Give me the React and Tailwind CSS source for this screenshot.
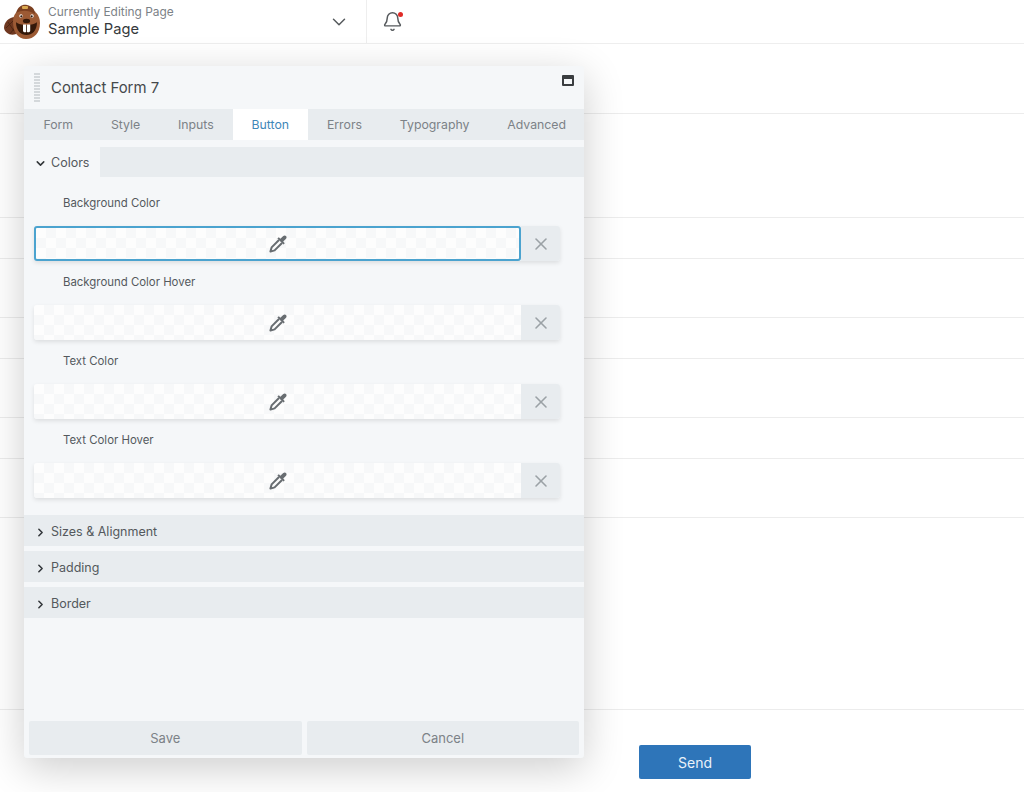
import React from 'react';
import { Bell, ChevronDown, ChevronRight, X } from 'lucide-react';

const pageRows = [70, 104, 41, 59, 41, 59, 41, 59, 192];
const tabs = ['Form', 'Style', 'Inputs', 'Button', 'Errors', 'Typography', 'Advanced'];
const colorFields = ['Background Color', 'Background Color Hover', 'Text Color', 'Text Color Hover'];
const closedSections = ['Sizes & Alignment', 'Padding', 'Border'];

function Beaver() {
  return (
    <svg viewBox="0 0 38 36" className="w-[38px] h-[36px]">
      <path d="M11 13 C5 13 0 18 0 24 C1 29 6 32 12 30 C14 26 14 17 11 13Z" fill="#6f3820" />
      <path d="M4 18 L10 27 M2 24 L9 17 M6 30 L12 22" stroke="#47220f" strokeWidth="0.8" />
      <path d="M9 18 C9 9 14 5 22 5 C31 5 36 11 36 19 C36 29 30 35 22 35 C14 35 9 28 9 18Z" fill="#9c5a34" />
      <path d="M12 9 C14 2 19 0 23 1 C28 2 31 5 31 10 C24 6 18 6 12 9Z" fill="#7b3f20" />
      <rect x="18" y="2" width="6" height="3" rx="1" fill="#d9a84f" />
      <circle cx="17" cy="12" r="1.7" fill="#fff" />
      <circle cx="28" cy="12" r="1.7" fill="#fff" />
      <circle cx="17.3" cy="12.3" r="1.1" fill="#2b1a10" />
      <circle cx="27.7" cy="12.3" r="1.1" fill="#2b1a10" />
      <path d="M12 18 C15 22 30 22 33 18 C33 27 28 31 22.5 31 C17 31 12 27 12 18Z" fill="#341809" />
      <ellipse cx="22.5" cy="17" rx="3.6" ry="2.2" fill="#341809" />
      <path d="M19 20.5 H22.2 V28 C20.5 28.6 19.4 28 19 27Z" fill="#fff" />
      <path d="M23 20.5 H26.2 V27 C25.8 28 24.6 28.6 23 28Z" fill="#fff" />
    </svg>
  );
}

function Eyedropper() {
  return (
    <svg viewBox="0 0 20 20" className="w-[20px] h-[20px]">
      <path d="M11 6 L3.6 13.4 L2.4 17.6 L6.6 16.4 L14 9" fill="#fbfbfb" stroke="#686d71" strokeWidth="2" strokeLinejoin="round" />
      <path d="M9.4 4.6 L15.4 10.6 L16.8 9.2 L15.2 7.6 L17.8 5 C18.8 4 18.8 2.6 18 1.9 C17.2 1.2 16 1.2 15 2.2 L12.4 4.8 L10.8 3.2Z" fill="#686d71" />
    </svg>
  );
}

function ColorField({ label, focused }) {
  return (
    <div>
      <div className="h-[49px] pt-[17px] pl-[39px] text-[11.4px] leading-[18px] text-[#54595d]">{label}</div>
      <div className="flex h-[35px] ml-[10px] mr-[24px] rounded-[3px] shadow-[0_2px_4px_rgba(0,0,0,0.1)]">
        <div className={`flex-1 flex items-center justify-center rounded-l-[3px] bg-[repeating-conic-gradient(#f7f8f9_0_25%,#fdfdfd_0_50%)] bg-[length:20px_20px] ${focused ? 'border-2 border-[#4ba3cf] rounded-[3px]' : ''}`}>
          <Eyedropper />
        </div>
        <button className="w-[39px] flex items-center justify-center bg-[#e8ecef] rounded-r-[3px] text-[#9ba1a6]">
          <X size={20} strokeWidth={1.9} />
        </button>
      </div>
    </div>
  );
}

export default function App() {
  return (
    <div className="relative h-[792px] overflow-hidden bg-white font-['Inter',sans-serif]">
      <header className="flex h-[44px] border-b border-[#eeeeee]">
        <div className="flex items-center w-[367px] border-r border-[#eeeeee] pl-[4px]">
          <Beaver />
          <div className="ml-[6px] flex-1 mb-[1px]">
            <div className="text-[11.9px] leading-[16px] text-[#7c8287]">Currently Editing Page</div>
            <div className="text-[14.7px] leading-[19px] text-[#35393c]">Sample Page</div>
          </div>
          <ChevronDown size={22} strokeWidth={1.6} className="mr-[16px] text-[#55595c]" />
        </div>
        <div className="relative flex items-center ml-[15px]">
          <Bell size={21} strokeWidth={1.7} className="text-[#55595c]" />
          <span className="absolute top-[12px] left-[16px] w-[5px] h-[5px] rounded-full bg-[#e02b27]" />
        </div>
      </header>

      {pageRows.map((height, i) => (
        <div key={i} style={{ height }} className="border-b border-[#ececec]" />
      ))}

      <div className="flex pl-[639px] pt-[35px]">
        <button className="w-[112px] h-[34px] rounded-[2px] bg-[#2e75b9] text-[14px] text-[#eaf2f9]">Send</button>
      </div>

      <div className="absolute left-[24px] top-[66px] flex flex-col w-[560px] h-[692px] rounded-[3px] bg-[#f5f7f9] shadow-[0_10px_40px_rgba(0,0,0,0.2)]">
        <div className="flex items-center justify-between h-[43px] shrink-0 pl-[10px] pr-[10px]">
          <div className="flex items-center">
            <div className="w-[6px] h-[30px] bg-[repeating-linear-gradient(to_bottom,#d4d8db_0_2px,transparent_2px_3px)]" />
            <span className="ml-[11px] pt-[1px] text-[14.9px] text-[#45494c]">Contact Form 7</span>
          </div>
          <div className="w-[12px] h-[11px] mb-[14px] rounded-[1px] border-2 border-t-[4px] border-[#3a3d40]" />
        </div>

        <div className="flex h-[31px] shrink-0 pl-[0.5px] bg-[#e8ecef]">
          {tabs.map((tab) => (
            <div
              key={tab}
              className={`flex items-center px-[18.9px] pt-[2px] text-[12.3px] ${tab === 'Button' ? 'bg-white text-[#3f87b8]' : 'text-[#7c8287]'}`}
            >
              {tab}
            </div>
          ))}
        </div>

        <div className="flex h-[30px] shrink-0 mt-[7px] bg-[#e8ecef]">
          <div className="flex items-center w-[76px] pl-[10px] pt-[2px] bg-[#f5f7f9] text-[12.5px] text-[#54595d]">
            <ChevronDown size={13} strokeWidth={2.8} className="mr-[4px] text-[#33373a]" />
            Colors
          </div>
        </div>

        {colorFields.map((label, i) => (
          <div key={label} className={i > 0 ? 'mt-[-5px]' : ''}>
            <ColorField label={label} focused={i === 0} />
          </div>
        ))}

        <div className="flex flex-col gap-[5px] mt-[17px]">
          {closedSections.map((name) => (
            <div key={name} className="flex items-center h-[31px] pl-[10px] pt-[3px] bg-[#e8ecef] text-[12.5px] text-[#54595d]">
              <ChevronRight size={13} strokeWidth={2.8} className="mr-[4px] text-[#33373a]" />
              {name}
            </div>
          ))}
        </div>

        <div className="flex gap-[5px] mt-auto mb-[3px] px-[5px]">
          <button className="flex-1 h-[34px] pt-[1px] rounded-[2px] bg-[#e8ecef] text-[13px] text-[#7c8287]">Save</button>
          <button className="flex-1 h-[34px] pt-[1px] rounded-[2px] bg-[#e8ecef] text-[13px] text-[#7c8287]">Cancel</button>
        </div>
      </div>
    </div>
  );
}
